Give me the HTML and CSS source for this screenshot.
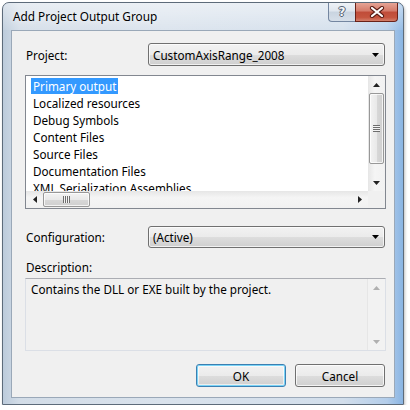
FILE: index.html
```html
<!DOCTYPE html>
<html>
<head>
<meta charset="utf-8">
<link rel="stylesheet" href="styles.css">
</head>
<body>
<div class="window">
  <div class="titlebar">
    <span class="title">Add Project Output Group</span>
    <div class="caption-buttons">
      <div class="cap help"><span class="help-glyph">?</span></div>
      <div class="cap close">
        <svg width="16" height="12" viewBox="0 0 16 12">
          <path d="M3 2 L13 10 M13 2 L3 10" stroke="#5a1c14" stroke-width="4.2" stroke-linecap="round"/>
          <path d="M3 2 L13 10 M13 2 L3 10" stroke="#ffffff" stroke-width="2.2" stroke-linecap="round"/>
        </svg>
      </div>
    </div>
  </div>
  <div class="client">
    <div class="field-row">
      <span class="label">Project:</span>
      <div class="combo">
        <span class="combo-text">CustomAxisRange_2008</span>
        <svg class="combo-arrow" width="7" height="4" viewBox="0 0 7 4"><path d="M0 0 H7 L3.5 4 Z" fill="#000"/></svg>
      </div>
    </div>

    <div class="listbox">
      <div class="items">
        <div class="item"><span class="sel">Primary output</span></div>
        <div class="item"><span>Localized resources</span></div>
        <div class="item"><span>Debug Symbols</span></div>
        <div class="item"><span>Content Files</span></div>
        <div class="item"><span>Source Files</span></div>
        <div class="item"><span>Documentation Files</span></div>
        <div class="item"><span>XML Serialization Assemblies</span></div>
      </div>
      <div class="vscroll">
        <div class="arrow-btn"><svg width="7" height="4" viewBox="0 0 7 4"><path d="M3.5 0 L7 4 H0 Z" fill="#222"/></svg></div>
        <div class="vthumb"><div class="grip-h"></div></div>
        <div class="vtrack"></div>
        <div class="arrow-btn"><svg width="7" height="4" viewBox="0 0 7 4"><path d="M0 0 H7 L3.5 4 Z" fill="#222"/></svg></div>
      </div>
      <div class="hscroll">
        <div class="arrow-btn"><svg width="4" height="7" viewBox="0 0 4 7"><path d="M4 0 V7 L0 3.5 Z" fill="#222"/></svg></div>
        <div class="hthumb"><div class="grip-v"></div></div>
        <div class="htrack"></div>
        <div class="arrow-btn"><svg width="4" height="7" viewBox="0 0 4 7"><path d="M0 0 V7 L4 3.5 Z" fill="#222"/></svg></div>
      </div>
      <div class="corner"></div>
    </div>

    <div class="field-row config">
      <span class="label">Configuration:</span>
      <div class="combo">
        <span class="combo-text">(Active)</span>
        <svg class="combo-arrow" width="7" height="4" viewBox="0 0 7 4"><path d="M0 0 H7 L3.5 4 Z" fill="#000"/></svg>
      </div>
    </div>

    <div class="desc-label">Description:</div>
    <div class="textbox">
      <div class="tb-text">Contains the DLL or EXE built by the project.</div>
      <div class="vscroll disabled">
        <div class="arrow-btn"><svg width="7" height="4" viewBox="0 0 7 4"><path d="M3.5 0 L7 4 H0 Z" fill="#b0b0b0"/></svg></div>
        <div class="vtrack"></div>
        <div class="arrow-btn"><svg width="7" height="4" viewBox="0 0 7 4"><path d="M0 0 H7 L3.5 4 Z" fill="#b0b0b0"/></svg></div>
      </div>
    </div>

    <div class="buttons">
      <div class="btn default">OK</div>
      <div class="btn">Cancel</div>
    </div>
  </div>
</div>
</body>
</html>
```
FILE: styles.css
```css
* { box-sizing: border-box; }
html, body {
  margin: 0;
  padding: 0;
  background: #ffffff;
}
body {
  font-family: "Noto Sans", "Open Sans", sans-serif;
  font-size: 11.7px;
  color: #000;
}
.window {
  margin: 2px 0 0 2px;
  width: 402px;
  height: 403px;
  border: 1px solid #5d6b7a;
  border-radius: 7px 7px 0 0;
  background: linear-gradient(to right, #bccbdb 0%, #d2dce7 4%, #d9e2ec 40%, #d2deeb 85%, #b3cdea 96%, #8ab5e3 100%);
  box-shadow: 1px 2px 3px rgba(0,0,0,0.25);
  display: flex;
  flex-direction: column;
}
.titlebar {
  height: 27px;
  display: flex;
  align-items: flex-start;
  padding: 0 5px 0 10px;
  border-radius: 6px 6px 0 0;
  background: linear-gradient(to bottom, rgba(255,255,255,0.5), rgba(255,255,255,0.1));
}
.title {
  margin-top: 5px;
  font-size: 11.8px;
  line-height: 17px;
  color: #000;
  text-shadow: 0 0 6px rgba(255,255,255,0.9);
}
.caption-buttons {
  margin-left: auto;
  display: flex;
}
.cap {
  height: 19px;
  display: flex;
  align-items: center;
  justify-content: center;
}
.help {
  width: 27px;
  border: 1px solid #7486a0;
  border-top: none;
  border-right: none;
  border-radius: 0 0 0 4px;
  background: linear-gradient(to bottom, #eef2f7 0%, #dfe6ee 45%, #c9d4e0 50%, #d6dfe9 100%);
}
.help-glyph {
  font-family: "DejaVu Sans", sans-serif;
  font-size: 12px;
  font-weight: bold;
  color: #f4f6f9;
  text-shadow: 0 0 1px #4a5566, 1px 0 0 #5a6577, -1px 0 0 #5a6577, 0 1px 0 #5a6577, 0 -1px 0 #5a6577;
  line-height: 1;
}
.close {
  width: 43px;
  border: 1px solid #6a2219;
  border-top: none;
  border-radius: 0 0 4px 0;
  background: linear-gradient(to bottom, #e6a496 0%, #d47a69 45%, #c04c39 50%, #c5553f 80%, #d37f6b 100%);
}
.client {
  flex: 1;
  margin: 0 8px 6px 8px;
  background: #f0f0f0;
  border: 1px solid #9aa8b8;
  padding: 12px 8px 0 13px;
  display: flex;
  flex-direction: column;
}
.field-row {
  display: flex;
  align-items: center;
  height: 23px;
}
.label {
  width: 123px;
  padding-left: 1px;
}
.combo {
  flex: 1;
  height: 23px;
  margin-right: 1px;
  border: 1px solid #707070;
  border-radius: 3px;
  background: linear-gradient(to bottom, #f2f2f2 0%, #ebebeb 50%, #dddddd 51%, #cfcfcf 100%);
  box-shadow: inset 0 0 0 1px rgba(255,255,255,0.7);
  display: flex;
  align-items: center;
  padding: 0 5px 0 4px;
}
.combo-text {
  flex: 1;
}
.listbox {
  margin-top: 9px;
  height: 134px;
  border: 1px solid #828790;
  background: #fff;
  display: grid;
  grid-template-columns: 1fr 17px;
  grid-template-rows: 1fr 17px;
}
.items {
  overflow: hidden;
  padding: 2px 0 0 5px;
}
.item {
  height: 17px;
  line-height: 16px;
  white-space: nowrap;
}
.item span {
  padding: 0 2px;
}
.item .sel {
  background: #3399ff;
  color: #fff;
  display: inline-block;
  height: 16px;
}
.vscroll {
  display: flex;
  flex-direction: column;
  background: linear-gradient(to right, #e6e6e6, #f5f5f5 40%, #f1f1f1);
}
.arrow-btn {
  width: 17px;
  height: 17px;
  display: flex;
  align-items: center;
  justify-content: center;
  flex: none;
}
.vthumb {
  height: 71px;
  margin: 0 1px;
  border: 1px solid #989898;
  border-radius: 2px;
  background: linear-gradient(to right, #f3f3f3, #e9e9e9 50%, #d8d8d8 51%, #cfcfcf);
  box-shadow: inset 0 0 0 1px rgba(255,255,255,0.75);
  display: flex;
  align-items: center;
  justify-content: center;
  flex: none;
}
.grip-h {
  width: 7px;
  height: 7px;
  background: repeating-linear-gradient(to bottom, #6d6d6d 0 1px, #f3f3f3 1px 2px);
}
.vtrack { flex: 1; }
.hscroll {
  display: flex;
  background: linear-gradient(to bottom, #e6e6e6, #f5f5f5 40%, #f1f1f1);
}
.hthumb {
  width: 47px;
  margin: 1px 0;
  border: 1px solid #989898;
  border-radius: 2px;
  background: linear-gradient(to bottom, #f3f3f3, #e9e9e9 50%, #d8d8d8 51%, #cfcfcf);
  box-shadow: inset 0 0 0 1px rgba(255,255,255,0.75);
  display: flex;
  align-items: center;
  justify-content: center;
  flex: none;
}
.grip-v {
  width: 7px;
  height: 7px;
  background: repeating-linear-gradient(to right, #6d6d6d 0 1px, #f3f3f3 1px 2px);
}
.htrack { flex: 1; }
.corner { background: #f0f0f0; }
.config { margin-top: 17px; height: 22px; }
.config .combo { height: 22px; }
.desc-label {
  margin-top: 11px;
  height: 16px;
  line-height: 16px;
  padding-left: 1px;
}
.textbox {
  margin-top: 3px;
  height: 73px;
  border: 1px solid #dbdfe6;
  border-top-color: #abadb3;
  background: #f0f0f0;
  display: flex;
}
.tb-text {
  flex: 1;
  padding: 2px 0 0 5px;
  line-height: 16px;
}
.vscroll.disabled {
  background: #f2f2f2;
  border-left: 1px solid #e6e6e6;
}
.buttons {
  margin-top: 13px;
  display: flex;
  justify-content: flex-end;
  gap: 9px;
  padding-right: 1px;
}
.btn {
  width: 90px;
  height: 23px;
  border: 1px solid #707070;
  border-radius: 3px;
  background: linear-gradient(to bottom, #f2f2f2 0%, #ebebeb 50%, #dddddd 51%, #cfcfcf 100%);
  box-shadow: inset 0 0 0 1px rgba(255,255,255,0.75);
  display: flex;
  align-items: center;
  justify-content: center;
}
.btn.default {
  border-color: #3c7fb1;
  box-shadow: inset 0 0 0 1px #7ad4f7, inset 0 0 0 2px rgba(255,255,255,0.6);
}
```
